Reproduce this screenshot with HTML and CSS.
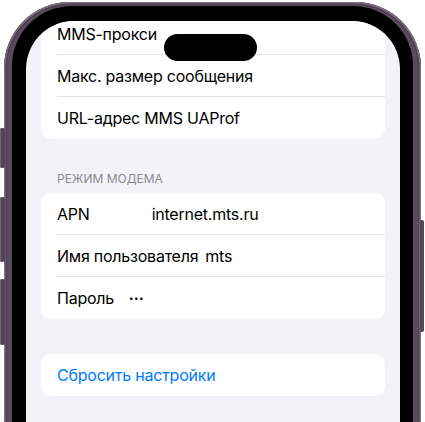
FILE: index.html
```html
<!DOCTYPE html>
<html lang="ru">
<head>
<meta charset="utf-8">
<title>Настройки</title>
<link rel="stylesheet" href="styles.css">
</head>
<body>
<div class="phone">
  <span class="btn btn-action"></span>
  <span class="btn btn-vol-up"></span>
  <span class="btn btn-vol-down"></span>
  <span class="btn btn-power"></span>
  <div class="bezel">
    <div class="screen">
      <div class="island"></div>
      <div class="content">
        <div class="card">
          <div class="row"><span class="label">MMS-прокси</span></div>
          <div class="row"><span class="label">Макс. размер сообщения</span></div>
          <div class="row"><span class="label">URL-адрес MMS UAProf</span></div>
        </div>
        <div class="section-header">Режим модема</div>
        <div class="card">
          <div class="row"><span class="label">APN</span><span class="value value-apn">internet.mts.ru</span></div>
          <div class="row"><span class="label">Имя пользователя</span><span class="value value-user">mts</span></div>
          <div class="row"><span class="label">Пароль</span><span class="value value-pass">•••</span></div>
        </div>
        <div class="card card-reset">
          <div class="row"><span class="link">Сбросить настройки</span></div>
        </div>
      </div>
    </div>
  </div>
</div>
</body>
</html>
```
FILE: styles.css
```css
html, body {
  margin: 0;
  padding: 0;
  background: #ffffff;
  overflow: hidden;
  height: 422px;
}

body {
  font-family: Inter, "Noto Sans", "Liberation Sans", sans-serif;
  -webkit-font-smoothing: antialiased;
}

.phone {
  position: relative;
  margin: 2px 0 0 4px;
  width: 417px;
  height: 480px;
  box-sizing: border-box;
  padding: 4px 8px 0 8px;
  background: #5a4a5d;
  border-radius: 66px;
  box-shadow: inset 0 0 0 1.5px #7e6e81, inset 0 0 0 3px #4d3e50;
}

.btn {
  position: absolute;
  width: 5px;
  background: #524355;
  border-radius: 2px;
  box-shadow: inset 1px 0 0 #716174;
}

.btn-action { left: -4px; top: 126px; height: 40px; }
.btn-vol-up { left: -4px; top: 195px; height: 65px; }
.btn-vol-down { left: -4px; top: 277px; height: 66px; }
.btn-power { right: -3px; top: 218px; height: 112px; }

.bezel {
  height: 100%;
  box-sizing: border-box;
  padding: 15px 13px 0 14px;
  background: #000000;
  border-radius: 60px 60px 0 0;
}

.screen {
  position: relative;
  height: 100%;
  background: #f2f2f7;
  border-radius: 48px 48px 0 0;
  overflow: hidden;
}

.island {
  position: absolute;
  left: 138px;
  top: 13px;
  width: 93px;
  height: 27px;
  background: #000000;
  border-radius: 14px;
  z-index: 2;
}

.content {
  margin-top: -8px;
  padding: 0 15px;
}

.card {
  background: #ffffff;
  border-radius: 10px;
}

.row {
  display: flex;
  align-items: center;
  height: 42px;
  box-sizing: border-box;
  margin-left: 16px;
  padding-right: 16px;
  border-bottom: 1px solid #e4e4e8;
  font-size: 16px;
  letter-spacing: -0.23px;
  color: #000000;
  white-space: nowrap;
}

.row:last-child {
  border-bottom: none;
}

.section-header {
  padding: 33px 16px 7px;
  font-size: 12px;
  line-height: 14px;
  text-transform: uppercase;
  color: #8a8a8e;
}

.value-apn { margin-left: 62px; }
.value-user { margin-left: 7px; }
.value-pass { margin-left: 15px; font-size: 8px; letter-spacing: 0.5px; }

.card-reset {
  margin-top: 35px;
}

.link {
  color: #007aff;
}
```
